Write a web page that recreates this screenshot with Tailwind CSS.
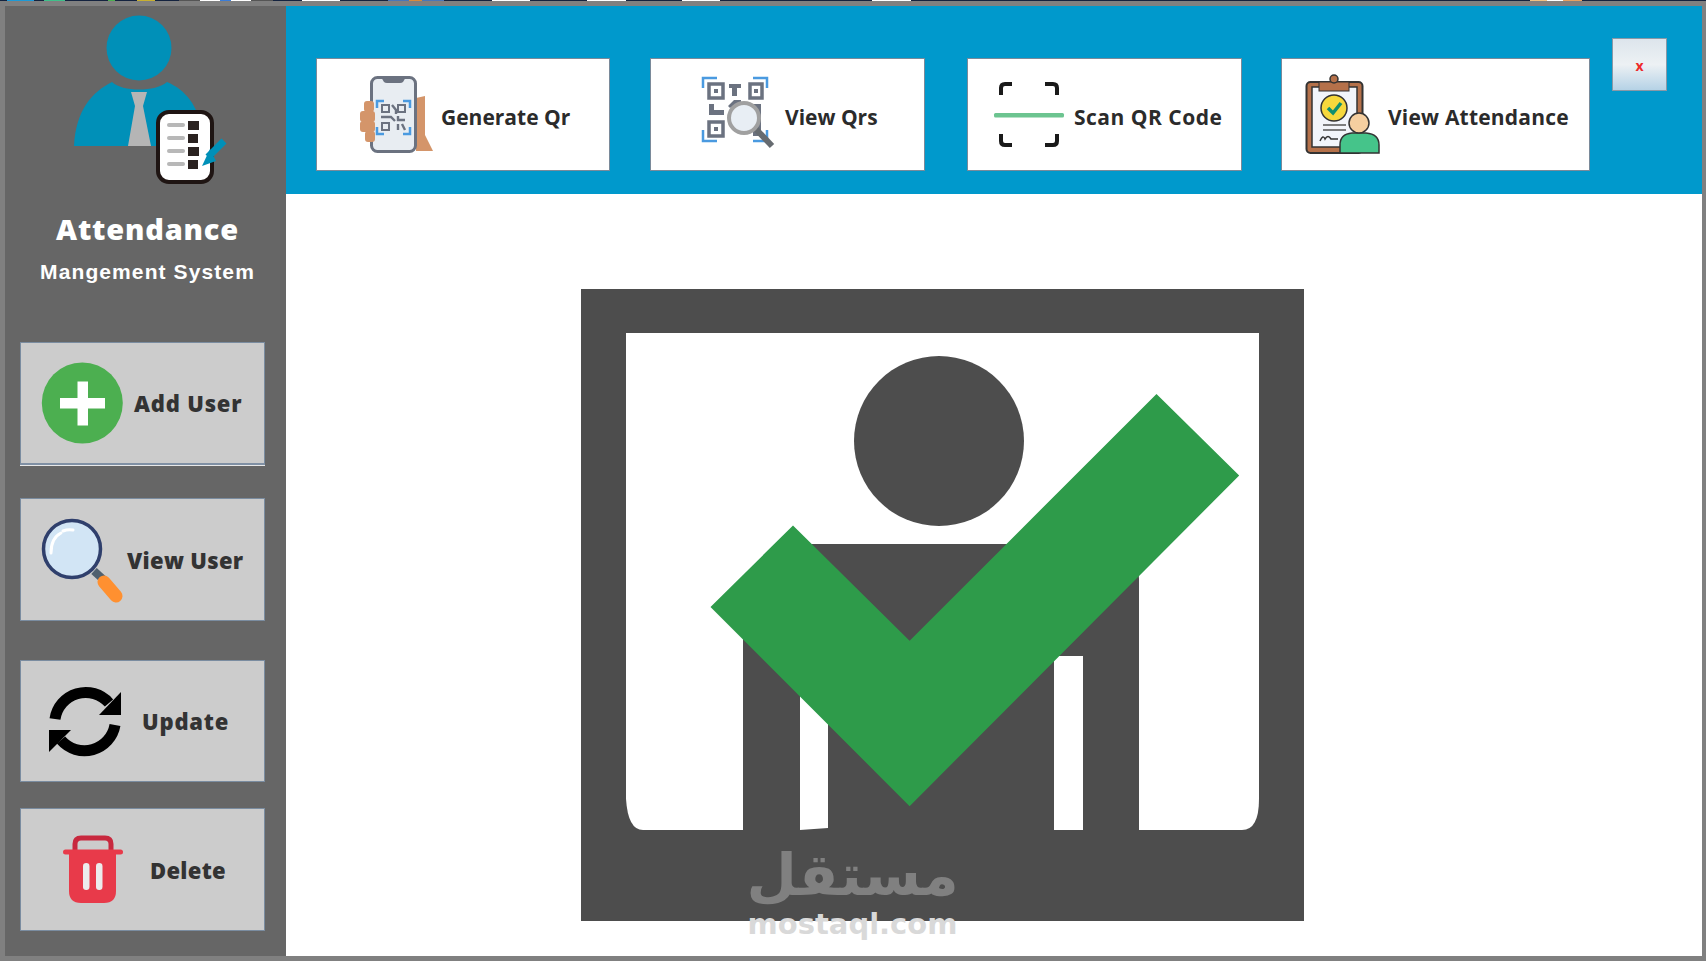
<!DOCTYPE html>
<html lang="en">
<head>
    <meta charset="UTF-8">
    <title>Attendance Mangement System</title>
    <script src="https://cdn.jsdelivr.net/npm/@tailwindcss/browser@4"></script>
</head>
<body class="bg-[#808080] h-screen overflow-hidden flex flex-col">

    <!-- desktop peeking out above the window -->
    <div class="flex h-px w-full bg-[#14233f] shrink-0">
        <div class="w-[7px]"></div><div class="w-[27px] bg-[#1e9ad6]"></div><div class="w-[10px]"></div><div class="w-[21px] bg-[#3fc08a]"></div>
        <div class="w-[43px]"></div><div class="w-[7px] bg-[#4caf50]"></div><div class="w-[22px]"></div><div class="w-[18px] bg-[#c8b030]"></div>
        <div class="w-[24px]"></div><div class="w-[21px] bg-[#555555]"></div><div class="w-[20px] bg-white"></div><div class="w-[11px] bg-[#3b7dd8]"></div>
        <div class="w-[20px] bg-white"></div><div class="w-[22px] bg-[#555555]"></div><div class="w-[29px]"></div><div class="w-[38px] bg-white"></div>
        <div class="w-[48px]"></div><div class="w-[21px] bg-[#4a76b8]"></div><div class="w-[13px] bg-[#d98a3a]"></div><div class="w-[22px] bg-[#4a76b8]"></div>
        <div class="w-[48px]"></div><div class="w-[38px] bg-white"></div><div class="w-[57px]"></div><div class="w-[39px] bg-white"></div>
        <div class="w-[56px]"></div><div class="w-[38px] bg-white"></div><div class="w-[152px]"></div><div class="w-[39px] bg-white"></div>
        <div class="w-[619px]"></div><div class="w-[17px] bg-[#f0c080]"></div><div class="w-[16px] bg-white"></div><div class="w-[19px] bg-[#e8a060]"></div>
    </div>

    <div class="flex pl-[5px] pr-[4px] pt-[5px] pb-[5px] h-[960px]">

        <!-- sidebar -->
        <aside class="w-[281px] shrink-0 bg-[#666666] flex flex-col">
            <svg class="w-[281px] h-[190px] shrink-0" viewBox="5 6 281 190">
                <circle cx="139" cy="48" r="32.5" fill="#0090b8"/>
                <path d="M74 146 C76 110 92 92 112 82 C122 92 156 92 167 82 C186 90 198 106 202 130 L202 146 Z" fill="#0090b8"/>
                <path d="M131 92 L147 92 L143 106 L151 146 L128 146 L135 106 Z" fill="#b5b5b5"/>
                <rect x="158" y="112" width="54" height="70" rx="11" fill="#fff" stroke="#1f1513" stroke-width="4"/>
                <rect x="167" y="123" width="18" height="4" rx="2" fill="#b8b8b8"/>
                <rect x="167" y="136" width="18" height="4" rx="2" fill="#b8b8b8"/>
                <rect x="167" y="149" width="18" height="4" rx="2" fill="#b8b8b8"/>
                <rect x="167" y="162" width="18" height="4" rx="2" fill="#b8b8b8"/>
                <rect x="188" y="121" width="11" height="9" fill="#2a2220"/>
                <rect x="188" y="134" width="10" height="9" fill="#2a2220"/>
                <rect x="188" y="147" width="11" height="9" fill="#2a2220"/>
                <rect x="188" y="160" width="10" height="9" fill="#2a2220"/>
                <path d="M224 141 L208 157" stroke="#0090b8" stroke-width="7"/>
                <path d="M210 149 L216 161 L202 166 Z" fill="#0090b8"/>
            </svg>
            <div class="font-['Open_Sans',sans-serif] font-extrabold text-[29px] leading-none tracking-[0.8px] text-white text-center pl-[4px] mt-[18px]">Attendance</div>
            <div class="font-['Liberation_Sans',sans-serif] font-bold text-[21px] leading-none tracking-[1.1px] text-white text-center pl-[4px] mt-[18px]">Mangement System</div>

            <div class="ml-[15px] mt-[60px] w-[245px] h-[123px] bg-[#cccccc] border border-[#7a8ca0] border-b-2 border-b-[#8090a4] shadow-[0_1px_0_#e8e8e8] flex items-center">
                <svg class="w-[90px] h-[90px] ml-[16px] shrink-0" viewBox="37 358 90 90">
                    <circle cx="82.3" cy="403" r="40.5" fill="#4caf50"/>
                    <path d="M60 398 H77.5 V381.5 H88 V398 H105 V408.5 H88 V425.5 H77.5 V408.5 H60 Z" fill="#fff"/>
                </svg>
                <span class="font-['Open_Sans',sans-serif] font-extrabold text-[22px] leading-none tracking-[0.8px] text-[#333333] ml-[7px]">Add User</span>
            </div>
            <div class="ml-[15px] mt-[33px] w-[245px] h-[123px] bg-[#cccccc] border border-[#7a8ca0] flex items-center">
                <svg class="w-[90px] h-[90px] ml-[18px] shrink-0" viewBox="37 515 90 90">
                    <path d="M92 571 L103 581" stroke="#50606e" stroke-width="8"/>
                    <path d="M102 582 L114 596" stroke="#ff9030" stroke-width="13" stroke-linecap="round"/>
                    <circle cx="70" cy="549" r="28.5" fill="#d2e5f5" stroke="#2f3f6c" stroke-width="3.5"/>
                    <path d="M49 553 Q49 538 59 533" fill="none" stroke="#fff" stroke-width="3" stroke-linecap="round"/>
                    <path d="M61 531 Q66 529 71 530" fill="none" stroke="#fff" stroke-width="3" stroke-linecap="round"/>
                </svg>
                <span class="font-['Open_Sans',sans-serif] font-extrabold text-[22px] leading-none tracking-[0.3px] text-[#333333] -ml-[2px]">View User</span>
            </div>
            <div class="ml-[15px] mt-[39px] w-[245px] h-[122px] bg-[#cccccc] border border-[#7a8ca0] flex items-center">
                <svg class="w-[90px] h-[90px] ml-[19px] shrink-0" viewBox="40 675 90 90">
                    <path d="M55 718 A31 31 0 0 1 109 702" fill="none" stroke="#000" stroke-width="11"/>
                    <path d="M121 691 L121 714 L99 714 Z" fill="#000"/>
                    <path d="M115 724 A31 31 0 0 1 61 739" fill="none" stroke="#000" stroke-width="11"/>
                    <path d="M49 729 L71 729 L49 751 Z" fill="#000"/>
                </svg>
                <span class="font-['Open_Sans',sans-serif] font-extrabold text-[22px] leading-none tracking-[0.8px] text-[#333333] ml-[12px]">Update</span>
            </div>
            <div class="ml-[15px] mt-[26px] w-[245px] h-[123px] bg-[#cccccc] border border-[#7a8ca0] flex items-center">
                <svg class="w-[90px] h-[90px] ml-[27px] shrink-0" viewBox="48 825 90 90">
                    <path d="M75 851 V844 Q75 838 81 838 H105 Q111 838 111 844 V851" fill="none" stroke="#c8283e" stroke-width="5"/>
                    <path d="M69 852 H116 V891 Q116 903 104 903 H81 Q69 903 69 891 Z" fill="#e83a4a"/>
                    <rect x="63" y="849.5" width="60" height="5" rx="2.5" fill="#e83a4a"/>
                    <rect x="83" y="863" width="6.5" height="27" rx="3.2" fill="#ececec"/>
                    <rect x="96" y="863" width="6.5" height="27" rx="3.2" fill="#ececec"/>
                </svg>
                <span class="font-['Open_Sans',sans-serif] font-extrabold text-[22px] leading-none tracking-[0.3px] text-[#333333] ml-[12px]">Delete</span>
            </div>
        </aside>

        <main class="relative flex-1 bg-white flex flex-col">
            <!-- top bar -->
            <div class="h-[188px] shrink-0 bg-[#0099cc] flex items-start pl-[30px] pt-[52px]">
                <button class="w-[294px] h-[113px] bg-white border border-[#7a8a9a] flex items-center">
                    <svg class="w-[80px] h-[90px] ml-[40px] shrink-0" viewBox="357 70 80 90">
                        <path d="M416 98 L425 96 L425 135 L433 151 L416 151 Z" fill="#d4956a"/>
                        <rect x="371.5" y="77.5" width="44" height="74" rx="6" fill="#e8edf2" stroke="#6b7280" stroke-width="3"/>
                        <path d="M381 77 H406 L403 82 Q402 83 400 83 H387 Q385 83 384 82 Z" fill="#6b7280"/>
                        <rect x="364" y="101" width="10" height="11" rx="3" fill="#d4956a"/>
                        <rect x="360" y="111" width="15" height="11" rx="3" fill="#d4956a"/>
                        <rect x="360" y="121" width="15" height="11" rx="3" fill="#d4956a"/>
                        <rect x="365" y="131" width="10" height="11" rx="3" fill="#d4956a"/>
                        <path d="M377 108 V101 H384 M403 101 H410 V108 M377 127 V134 H384 M403 134 H410 V127" fill="none" stroke="#4a9ae0" stroke-width="2.5"/>
                        <path d="M382 105 H389 V112 H382 Z M398 105 H405 V112 H398 Z M382 123 H389 V130 H382 Z" fill="none" stroke="#6b7280" stroke-width="2"/>
                        <path d="M392 105 L396 110 V114 M381 117 H391 L395 121 M398 116 V120 H405 M398 124 V130 M402 124 L405 130" fill="none" stroke="#6b7280" stroke-width="2.4"/>
                    </svg>
                    <span class="font-['Open_Sans',sans-serif] font-bold text-[21px] leading-none text-[#2b2b2b] ml-[4px] mt-[6px]">Generate Qr</span>
                </button>
                <button class="ml-[40px] w-[275px] h-[113px] bg-white border border-[#7a8a9a] flex items-center">
                    <svg class="w-[80px] h-[90px] ml-[46px] shrink-0" viewBox="696 70 80 90">
                        <path d="M702 88 V78 H716 M752 78 H766 V88 M702 130 V141 H716 M752 141 H766 V130" fill="none" stroke="#4a9ae0" stroke-width="2.5"/>
                        <path d="M708 84 H722 V98 H708 Z M749 84 H761 V98 H749 Z M708 122 H722 V136 H708 Z" fill="none" stroke="#6b7280" stroke-width="3.5"/>
                        <rect x="713" y="89" width="4" height="4" fill="#6b7280"/><rect x="753" y="89" width="4" height="4" fill="#6b7280"/><rect x="713" y="127" width="4" height="4" fill="#6b7280"/>
                        <path d="M728 84 H740 V88 H736 V96 H731 V88 H728 Z M708 104 H713 V110 H723 V115 H708 Z M727 106 L733 100 H735 V104 L729 108 Z M735 100 H740 V104 H735 Z M752 104 H760 V136 H752 Z" fill="#6b7280"/>
                        <path d="M752 126 L771 146" stroke="#666b70" stroke-width="6"/>
                        <circle cx="743" cy="118" r="15" fill="#e8eef4" stroke="#a0a0a0" stroke-width="4"/>
                    </svg>
                    <span class="font-['Open_Sans',sans-serif] font-bold text-[21px] leading-none text-[#2b2b2b] ml-[8px] mt-[6px]">View Qrs</span>
                </button>
                <button class="ml-[42px] w-[275px] h-[113px] bg-white border border-[#7a8a9a] flex items-center">
                    <svg class="w-[80px] h-[90px] ml-[21px] shrink-0" viewBox="989 70 80 90">
                        <path d="M1001 95 V88 Q1001 84 1005 84 H1012 M1045 84 H1053 Q1057 84 1057 88 V95 M1001 134 V141 Q1001 145 1005 145 H1012 M1045 145 H1053 Q1057 145 1057 141 V134" fill="none" stroke="#1a1a1a" stroke-width="4"/>
                        <rect x="994" y="113" width="70" height="4.5" rx="1.5" fill="#6cc490"/>
                    </svg>
                    <span class="font-['Open_Sans',sans-serif] font-bold text-[21px] leading-none tracking-[0.5px] text-[#2b2b2b] ml-[5px] mt-[6px]">Scan QR Code</span>
                </button>
                <button class="ml-[39px] w-[309px] h-[113px] bg-white border border-[#7a8a9a] flex items-center">
                    <svg class="w-[80px] h-[90px] ml-[22px] shrink-0" viewBox="1304 70 80 90">
                        <rect x="1306.5" y="82" width="56" height="71" rx="4" fill="#b5714a" stroke="#333" stroke-width="2"/>
                        <rect x="1312" y="87" width="45" height="60" fill="#f2f5fa" stroke="#333" stroke-width="1.5"/>
                        <rect x="1319" y="82" width="30" height="9" fill="#b5714a" stroke="#333" stroke-width="1"/>
                        <circle cx="1334" cy="79" r="4" fill="#b5714a" stroke="#333" stroke-width="1.5"/>
                        <circle cx="1334" cy="108" r="13" fill="#f6d83c" stroke="#333" stroke-width="1.5"/>
                        <path d="M1328 108 L1333 113 L1341 103" fill="none" stroke="#0f8f70" stroke-width="3.5"/>
                        <path d="M1323 125 H1346 M1323 130 H1346" stroke="#555" stroke-width="1.5"/>
                        <path d="M1320 141 Q1323 134 1325 139 Q1328 134 1331 139 H1338" fill="none" stroke="#333" stroke-width="1.5"/>
                        <path d="M1340 153 V145 Q1340 134 1352 133 H1366 Q1379 134 1379 145 V153 Z" fill="#45c48a" stroke="#333" stroke-width="1.5"/>
                        <circle cx="1359" cy="123" r="10" fill="#f5cfa0" stroke="#333" stroke-width="1.5"/>
                    </svg>
                    <span class="font-['Open_Sans',sans-serif] font-bold text-[21px] leading-none tracking-[0.2px] text-[#2b2b2b] ml-[4px] mt-[6px]">View Attendance</span>
                </button>
                <button class="ml-[22px] -mt-[20px] w-[55px] h-[53px] border border-[#8a98a6] bg-linear-to-b from-[#dde5ec] via-[#edf1f4] to-[#b5d2e6] font-['Open_Sans',sans-serif] font-bold text-[14px] leading-none text-[#ee2b2b] pt-[2px]">x</button>
            </div>

            <!-- picture area -->
            <div class="flex-1 pl-[295px] pt-[95px]">
                <svg class="w-[723px] h-[632px]" viewBox="0 0 723 632">
                    <rect width="723" height="632" fill="#4d4d4d"/>
                    <path d="M45 44 H678 V510 Q678 541 661 541 H62 Q47 541 45 510 Z" fill="#fff"/>
                    <circle cx="358" cy="152" r="85" fill="#4d4d4d"/>
                    <path d="M162 541 V320 L212 255 H523 Q558 255 558 290 V541 Z" fill="#4d4d4d"/>
                    <path d="M219 350 H247 V539 L219 541 Z" fill="#fff"/>
                    <rect x="473" y="367" width="29" height="174" fill="#fff"/>
                    <path d="M129.5 318 L212 236.5 L328.6 351.8 L575.5 104.9 L658.2 186.5 L328.6 517.2 Z" fill="#2e9b4a"/>
                </svg>
            </div>

            <!-- watermark over the picture -->
            <div class="absolute left-[464px] top-[840px] w-[205px] h-[110px] flex flex-col items-center select-none">
                <span dir="rtl" lang="ar" class="font-['DejaVu_Sans',sans-serif] font-bold text-[58px] leading-[58px] text-[#808080]">مستقل</span>
                <span class="font-['DejaVu_Sans',sans-serif] font-bold text-[29px] leading-[30px] mt-[5px] text-[#d9d9d9]">mostaql.com</span>
            </div>
        </main>
    </div>

</body>
</html>
